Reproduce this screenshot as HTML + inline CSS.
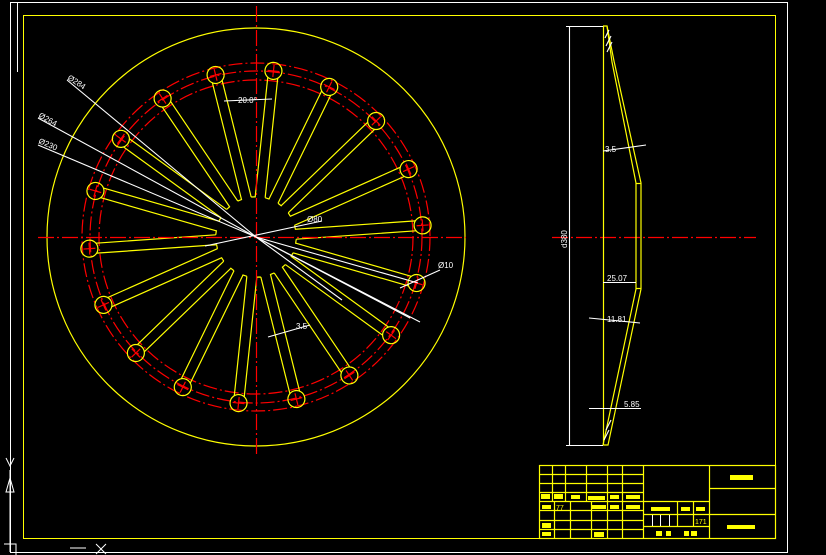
<!DOCTYPE html>
<html><head><meta charset="utf-8"><style>
html,body{margin:0;padding:0;background:#000;width:826px;height:555px;overflow:hidden}
svg{display:block}
text{font-family:"Liberation Sans",sans-serif;fill:#fff;font-size:8px}
</style></head><body>
<svg width="826" height="555" viewBox="0 0 826 555" xmlns="http://www.w3.org/2000/svg">
<defs>
<g id="sp" fill="none" stroke-width="1.2">
  <path stroke="#ff0" d="M-5,-40 L-5,-160 M5,-40 L5,-160 M5,-40 L9.5,-39"/>
  <circle stroke="#ff0" cx="0" cy="-167" r="8.5"/>
  <path stroke="#f00" d="M-6,-167 L6,-167 M0,-173 L0,-161"/>
</g>
</defs>
<!-- frames -->
<rect x="10.5" y="2.5" width="777" height="550" fill="none" stroke="#fff"/>
<line x1="17.5" y1="3" x2="17.5" y2="72" stroke="#fff"/>
<rect x="23.5" y="15.5" width="752" height="523" fill="none" stroke="#ff0"/>
<g stroke="#fff" fill="none" stroke-width="1">
<path d="M10,552 L10,470 M6,458 L10,466 L14,458 M6,492 L10,478 L14,492 Z M4,544 L16,544 L16,555 M70,548 L86,548 M96,544 L106,554 M106,544 L96,554"/>
</g>
<circle cx="256" cy="237" r="209" fill="none" stroke="#ff0" stroke-width="1.2"/>
<g fill="none" stroke="#f00" stroke-width="1.2" stroke-dasharray="14 3 2 3">
<circle cx="256" cy="237" r="157"/>
<circle cx="256" cy="237" r="166"/>
<circle cx="256" cy="237" r="174"/>
</g>
<g>
<use href="#sp" transform="translate(256 237) rotate(6)"/>
<use href="#sp" transform="translate(256 237) rotate(26)"/>
<use href="#sp" transform="translate(256 237) rotate(46)"/>
<use href="#sp" transform="translate(256 237) rotate(66)"/>
<use href="#sp" transform="translate(256 237) rotate(86)"/>
<use href="#sp" transform="translate(256 237) rotate(106)"/>
<use href="#sp" transform="translate(256 237) rotate(126)"/>
<use href="#sp" transform="translate(256 237) rotate(146)"/>
<use href="#sp" transform="translate(256 237) rotate(166)"/>
<use href="#sp" transform="translate(256 237) rotate(186)"/>
<use href="#sp" transform="translate(256 237) rotate(206)"/>
<use href="#sp" transform="translate(256 237) rotate(226)"/>
<use href="#sp" transform="translate(256 237) rotate(246)"/>
<use href="#sp" transform="translate(256 237) rotate(266)"/>
<use href="#sp" transform="translate(256 237) rotate(286)"/>
<use href="#sp" transform="translate(256 237) rotate(306)"/>
<use href="#sp" transform="translate(256 237) rotate(326)"/>
<use href="#sp" transform="translate(256 237) rotate(346)"/>
</g>
<g stroke="#f00" stroke-dasharray="16 3 2 3" stroke-width="1.2">
<line x1="38" y1="237.5" x2="466" y2="237.5"/>
<line x1="256.5" y1="6" x2="256.5" y2="456"/>
<line x1="552" y1="237.5" x2="756" y2="237.5"/>
</g>
<g stroke="#fff" stroke-width="1.1" fill="none">
<line x1="67" y1="80" x2="256" y2="237"/>
<line x1="38" y1="118" x2="256" y2="237"/>
<line x1="38" y1="145" x2="256" y2="237"/>
<line x1="205" y1="246" x2="322" y2="221"/>
<line x1="256" y1="237" x2="418" y2="283"/>
<line x1="256" y1="237" x2="420" y2="322"/>
<line x1="256" y1="237" x2="410" y2="318"/>
<line x1="256" y1="237" x2="342" y2="300"/>
<line x1="400" y1="288" x2="440" y2="270"/>
<line x1="268" y1="337" x2="310" y2="325"/>
<line x1="224" y1="101" x2="272" y2="99"/>
</g>
<text x="238" y="103">20.0°</text>
<text x="307" y="222">Ø80</text>
<text x="296" y="329">3.5</text>
<text x="438" y="268">Ø10</text>
<text transform="translate(67 79) rotate(33)">Ø284</text>
<text transform="translate(38 117) rotate(29)">Ø264</text>
<text transform="translate(38 143) rotate(23)">Ø230</text>
<g fill="none" stroke="#ff0" stroke-width="1.2">
<line x1="603.5" y1="26" x2="603.5" y2="445"/>
<path d="M603,26 L607,26 L612,62 L636,183 L636,289 L610,412 L603,445"/>
<path d="M607,26 L614,61 L641,183 L641,289 L615,412 L608,445 L603,445"/>
<line x1="636" y1="183.5" x2="641" y2="183.5"/>
<line x1="636" y1="288.5" x2="641" y2="288.5"/>
</g>
<g stroke="#fff" stroke-width="1.1" fill="none">
<path d="M569.5,26 L569.5,445 M566,26.5 L603,26.5 M566,445.5 L603,445.5"/>
<path d="M603,151 L646,145 M603,282.5 L636,282.5 M589,318 L640,323 M589,408.5 L641,408.5"/>
<path d="M609,30 L605,38 M611,36 L606,46 M612,42 L607,52 M609,430 L604,440 M611,420 L606,430"/>
</g>
<text x="605" y="152">3.5</text>
<text x="607" y="281">25.07</text>
<text x="607" y="322">11.81</text>
<text x="624" y="407">5.85</text>
<text transform="translate(567 248) rotate(-90)">d380</text>
<g stroke="#ff0" stroke-width="1.2" fill="none">
<rect x="539.5" y="465.5" width="236" height="73"/>
<path d="M643.5,465 L643.5,538 M709.5,465 L709.5,538 M709,488.5 L775,488.5 M709,514.5 L775,514.5"/>
<path d="M539,474.5 L643,474.5 M539,483.5 L643,483.5 M539,492.5 L643,492.5 M539,501.5 L709,501.5 M539,510.5 L643,510.5 M539,520.5 L643,520.5 M539,529.5 L643,529.5 M643,514.5 L709,514.5 M643,526.5 L709,526.5"/>
<path d="M552.5,465 L552.5,501 M565.5,465 L565.5,501 M586.5,465 L586.5,501 M607.5,465 L607.5,538 M622.5,465 L622.5,538"/>
<path d="M554.5,501 L554.5,538 M570.5,501 L570.5,538 M591.5,501 L591.5,538 M677.5,501 L677.5,526 M693.5,501 L693.5,526"/>
</g>
<g stroke="#fff" stroke-width="1"><path d="M652.5,515 L652.5,526 M660.5,515 L660.5,526 M669.5,515 L669.5,526"/></g>
<g fill="#ff0">
<rect x="541" y="494" width="9" height="5"/><rect x="554" y="494" width="9" height="5"/><rect x="571" y="495" width="9" height="4"/><rect x="588" y="496" width="17" height="4"/><rect x="610" y="495" width="9" height="4"/><rect x="626" y="495" width="14" height="4"/>
<rect x="542" y="505" width="9" height="4"/><rect x="592" y="505" width="14" height="4"/><rect x="610" y="505" width="9" height="4"/><rect x="626" y="505" width="14" height="4"/>
<rect x="542" y="523" width="9" height="5"/><rect x="542" y="532" width="9" height="4"/><rect x="594" y="532" width="10" height="5"/>
<rect x="651" y="507" width="19" height="4"/><rect x="681" y="507" width="9" height="4"/><rect x="696" y="507" width="9" height="4"/>
<rect x="656" y="531" width="6" height="5"/><rect x="666" y="531" width="5" height="5"/><rect x="684" y="531" width="5" height="5"/><rect x="691" y="531" width="6" height="5"/>
<rect x="730" y="475" width="23" height="5"/><rect x="727" y="525" width="28" height="4"/>
</g>
<text x="556" y="510" style="fill:#ff0;font-size:7px">77</text>
<text x="695" y="524" style="fill:#ff0;font-size:7px">171</text>
</svg>
</body></html>
